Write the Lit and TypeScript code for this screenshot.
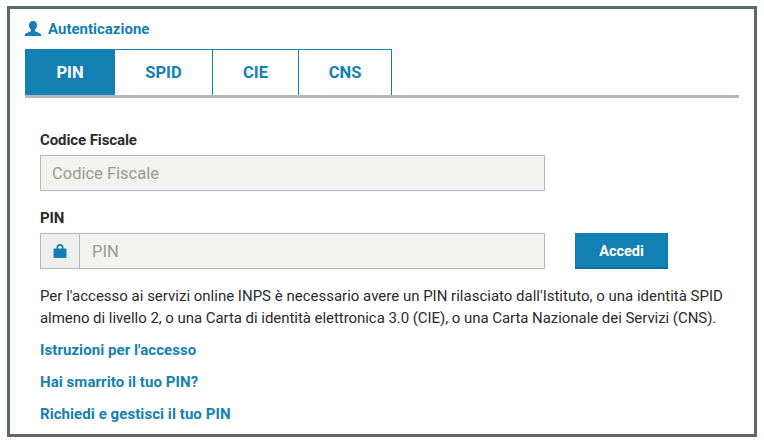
import { LitElement, html, css } from 'lit';
import { customElement, state } from 'lit/decorators.js';
import { classMap } from 'lit/directives/class-map.js';

const TABS = ['PIN', 'SPID', 'CIE', 'CNS'];
const LINKS = ["Istruzioni per l'accesso", 'Hai smarrito il tuo PIN?', 'Richiedi e gestisci il tuo PIN'];

@customElement('app-root')
export class AppRoot extends LitElement {
  static styles = css`
    :host {
      display: block;
      width: 764px;
      height: 448px;
      background: #fff;
      font-family: 'Roboto', sans-serif;
      color: #2b2b2b;
      padding: 6px 7px 0;
      box-sizing: border-box;
    }

    .frame {
      box-sizing: border-box;
      width: 750px;
      height: 431px;
      border: 3px solid #5c6770;
      padding: 9px 15px 0;
      overflow: hidden;
    }

    .title {
      display: flex;
      align-items: center;
      gap: 6px;
      height: 22px;
      color: #1380b4;
      font-size: 15px;
      font-weight: 700;
    }

    .title svg {
      width: 18px;
      height: 18px;
      margin-left: -1px;
    }

    .tabs {
      display: flex;
      margin-top: 9px;
      border-bottom: 3px solid #b1b9ba;
      height: 46px;
    }

    .tab {
      box-sizing: border-box;
      height: 46px;
      display: flex;
      align-items: center;
      justify-content: center;
      border: solid #1380b4;
      border-width: 1px 1px 0 0;
      color: #1380b4;
      font-size: 16.5px;
      font-weight: 700;
    }

    .tab.active {
      background: #1380b4;
      color: #fff;
      border-right: none;
    }

    .form {
      padding: 32px 0 0 15px;
    }

    label {
      display: block;
      font-size: 15px;
      font-weight: 700;
      line-height: 20px;
      letter-spacing: -0.1px;
    }

    .field {
      box-sizing: border-box;
      width: 505px;
      height: 36px;
      margin-top: 5px;
      background: #f2f3ee;
      border: 1px solid #b1b9ba;
      color: #999b96;
      font-size: 16.5px;
      display: flex;
      align-items: center;
      padding-left: 11px;
    }

    .pin-label {
      margin-top: 17px;
    }

    .pin-row {
      display: flex;
      align-items: flex-start;
      gap: 30px;
    }

    .pin {
      padding-left: 0;
    }

    .addon {
      box-sizing: border-box;
      width: 39px;
      height: 100%;
      background: #eeeeee;
      border-right: 1px solid #b1b9ba;
      display: flex;
      align-items: center;
      justify-content: center;
      flex: none;
    }

    .addon svg {
      width: 14px;
      height: 14px;
    }

    .pin span {
      padding-left: 12px;
    }

    button {
      width: 93px;
      height: 36px;
      margin-top: 5px;
      background: #1380b4;
      border: none;
      border-bottom: 2px solid #0f6d9b;
      color: #fff;
      font-family: inherit;
      font-size: 14.5px;
      font-weight: 700;
      padding: 2px 0 0;
    }

    p {
      margin: 16px 0 0;
      font-size: 15px;
      line-height: 22px;
      white-space: nowrap;
    }

    .tight {
      letter-spacing: -0.05px;
    }

    .links {
      display: flex;
      flex-direction: column;
      gap: 12px;
      margin-top: 11px;
    }

    a {
      color: #1380b4;
      font-size: 15px;
      line-height: 20px;
      font-weight: 700;
      letter-spacing: 0.07px;
      text-decoration: none;
    }
  `;

  @state() private active = 'PIN';

  private tabWidth(tab: string) {
    return { PIN: 90, SPID: 98, CIE: 86, CNS: 93 }[tab];
  }

  render() {
    return html`
      <div class="frame">
        <div class="title">
          <svg viewBox="0 0 18 18" fill="#1380b4">
            <path d="M9 1c2.500 0 4 1.800 4 4.300 0 2-.9 3.700-2 4.600v1.300l4.300 1.700c1.400.6 2.200 1.500 2.200 3.100H.5c0-1.600.8-2.500 2.200-3.100L7 11.200V9.900C5.900 9 5 7.300 5 5.300 5 2.800 6.500 1 9 1z" />
          </svg>
          Autenticazione
        </div>
        <div class="tabs">
          ${TABS.map(
            (tab) => html`
              <div
                class=${classMap({ tab: true, active: tab === this.active })}
                style="width:${this.tabWidth(tab)}px"
              >
                ${tab}
              </div>
            `
          )}
        </div>
        <div class="form">
          <label>Codice Fiscale</label>
          <div class="field">Codice Fiscale</div>
          <label class="pin-label">PIN</label>
          <div class="pin-row">
            <div class="field pin">
              <div class="addon">
                <svg viewBox="0 0 14 14" fill="#1380b4">
                  <path d="M3.500 4.500V3.500a3.500 3.500 0 0 1 7 0v1h2c.6 0 1 .4 1 1V13c0 .6-.4 1-1 1h-11c-.6 0-1-.4-1-1V5.500c0-.6.4-1 1-1zM5.200 4.500h3.600V3.500a1.800 1.800 0 0 0-3.600 0z" fill-rule="evenodd" />
                </svg>
              </div>
              <span>PIN</span>
            </div>
            <button>Accedi</button>
          </div>
          <p>
            Per l'accesso ai servizi online INPS è necessario avere un PIN rilasciato dall'Istituto, o una identità SPID<br />
            <span class="tight">almeno di livello 2, o una Carta di identità elettronica 3.0 (CIE), o una Carta Nazionale dei Servizi (CNS).</span>
          </p>
          <div class="links">
            ${LINKS.map((link) => html`<a href="#">${link}</a>`)}
          </div>
        </div>
      </div>
    `;
  }
}

declare global {
  interface HTMLElementTagNameMap {
    'app-root': AppRoot;
  }
}
